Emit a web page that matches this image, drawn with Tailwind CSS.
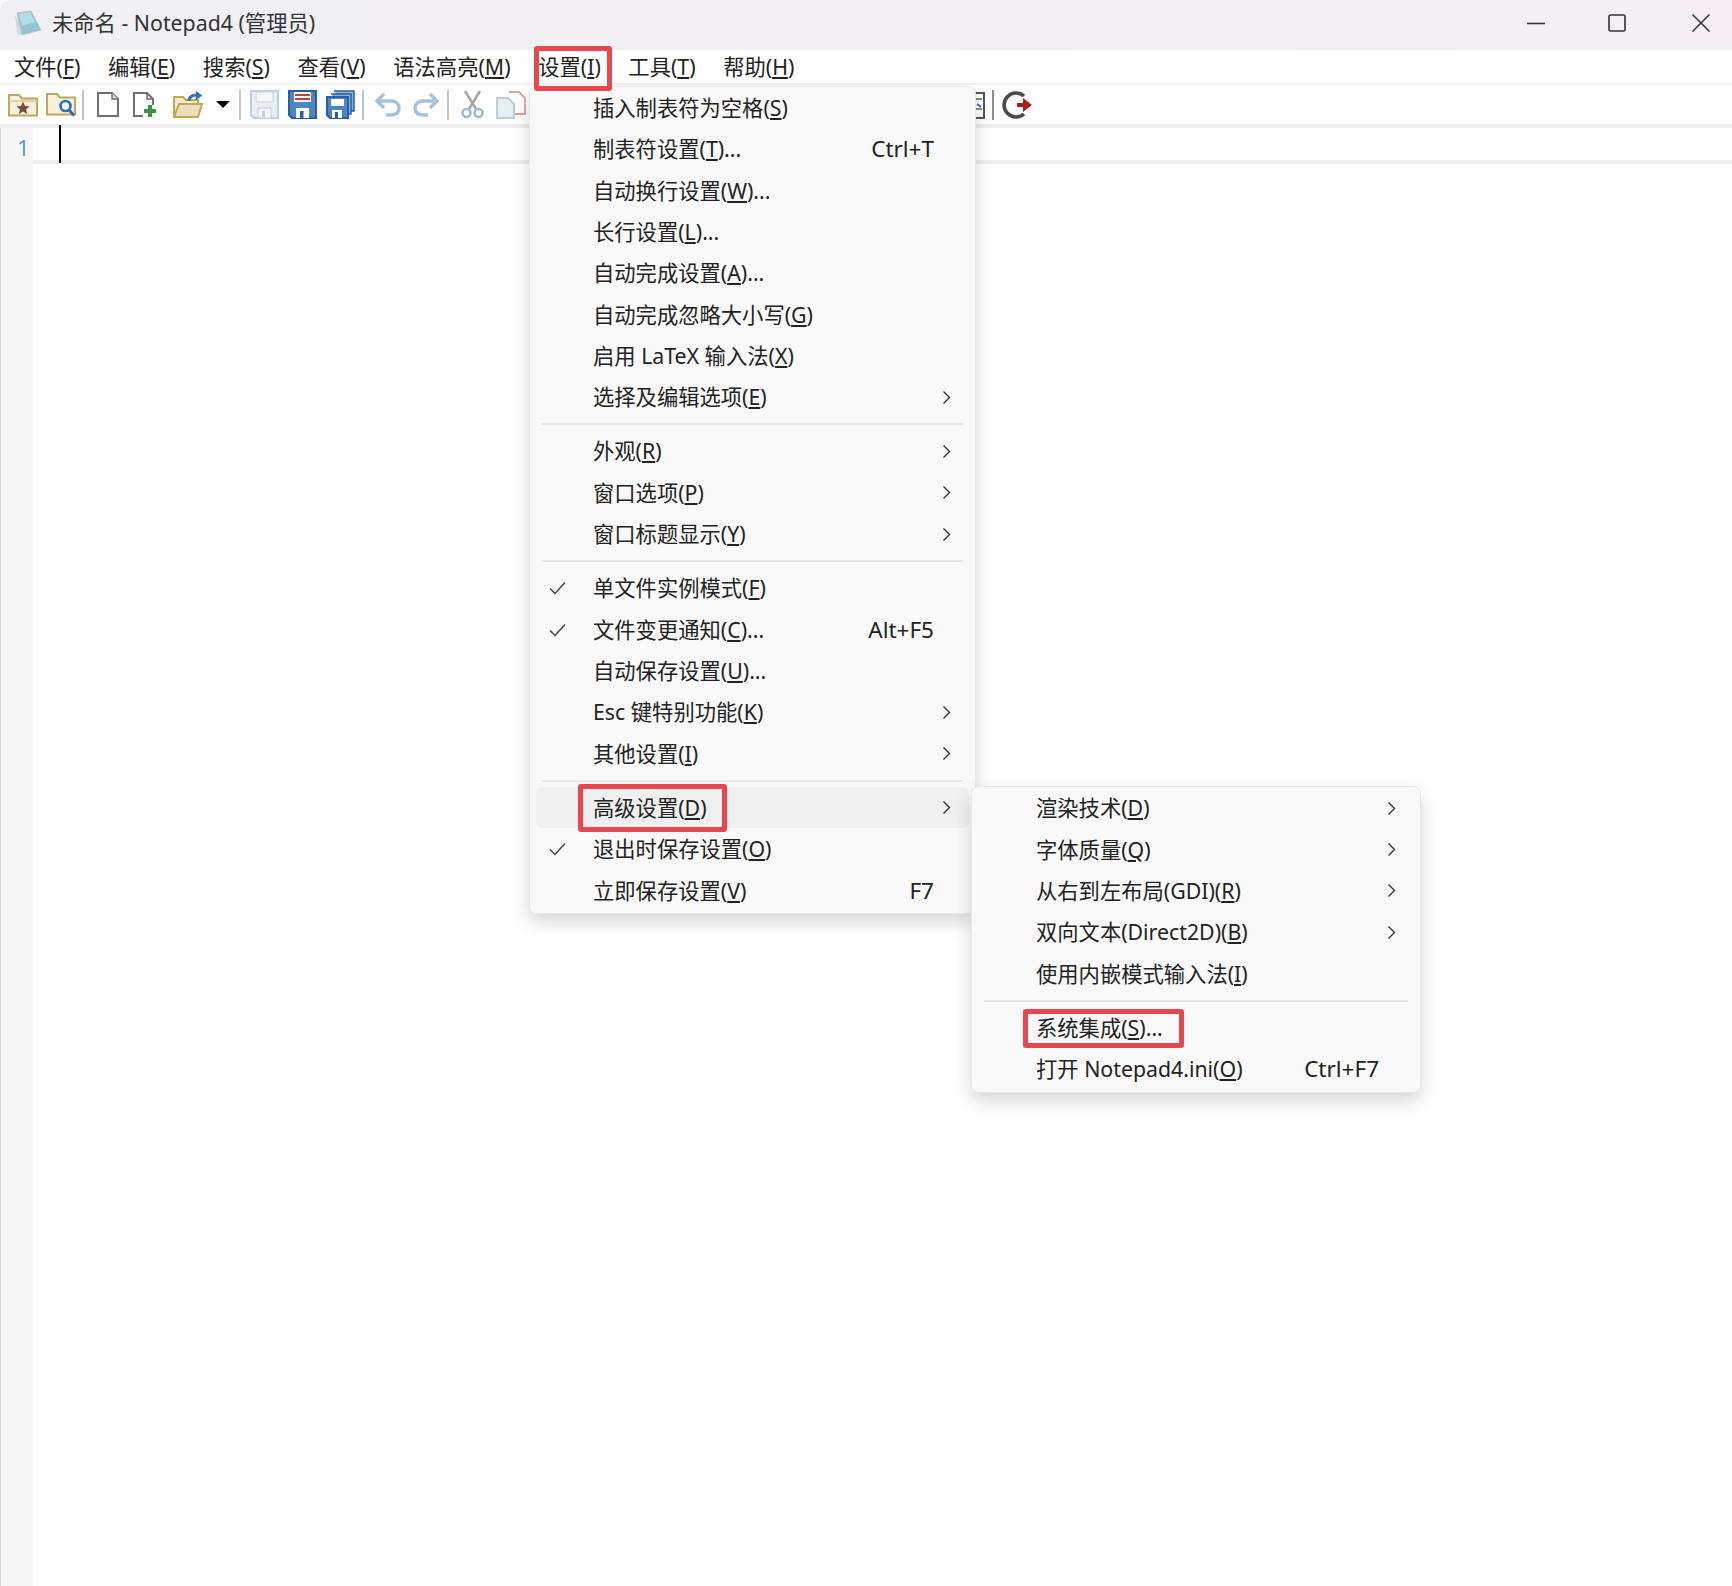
<!DOCTYPE html>
<html lang="zh-CN">
  <head>
    <meta charset="UTF-8" />
    <script src="https://cdn.jsdelivr.net/npm/@tailwindcss/browser@4"></script>
    <title>Notepad4</title>
  </head>
  <body class="bg-white">
    <div class="relative w-[1732px] h-[1586px] overflow-hidden bg-white text-[#222] text-[21.3px] font-['Noto_Sans','Noto_Sans_CJK_SC',sans-serif]">
      <!-- title bar -->
      <div class="h-[50px] pb-[4px] flex items-center rounded-tl-[10px] bg-gradient-to-r from-[#f0f0f5] to-[#f5eef5]">
        <svg class="ml-[14px] w-[29px] h-[26px]" viewBox="0 0 29 26">
          <path d="M1 5 L3 25 L12 24 Z" fill="#d8d8d4" />
          <path d="M3 3 L17 1 L27 20 L8 25 Z" fill="#8fc6d2" stroke="#b8c8cc" />
          <path d="M4 4 L16 2 L21 12 L8 16 Z" fill="#b5dde4" />
        </svg>
        <span class="ml-[9px] text-[#333]">未命名 - Notepad4 (管理员)</span>
        <div class="ml-auto flex items-center">
          <svg class="w-[20px] h-[20px]" viewBox="0 0 20 20"><path d="M1 10.5 H19" stroke="#333" stroke-width="1.6" /></svg>
          <svg class="ml-[61px] w-[20px] h-[20px]" viewBox="0 0 20 20"><rect x="2" y="2" width="16" height="16" rx="1.5" fill="none" stroke="#333" stroke-width="1.6" /></svg>
          <svg class="ml-[64px] mr-[21px] w-[20px] h-[20px]" viewBox="0 0 20 20"><path d="M1.5 1.5 L18.5 18.5 M18.5 1.5 L1.5 18.5" stroke="#333" stroke-width="1.5" /></svg>
        </div>
      </div>

      <!-- menu bar -->
      <div class="h-[35px] flex items-center pl-[14px] gap-[27.6px] border-b-2 border-[#f2f2f2]">
        <span>文件(<u class="underline-offset-2">F</u>)</span>
        <span>编辑(<u class="underline-offset-2">E</u>)</span>
        <span>搜索(<u class="underline-offset-2">S</u>)</span>
        <span>查看(<u class="underline-offset-2">V</u>)</span>
        <span>语法高亮(<u class="underline-offset-2">M</u>)</span>
        <span>设置(<u class="underline-offset-2">I</u>)</span>
        <span>工具(<u class="underline-offset-2">T</u>)</span>
        <span>帮助(<u class="underline-offset-2">H</u>)</span>
      </div>

      <!-- toolbar -->
      <div class="h-[39px] flex items-center">
        <!-- favorites -->
        <svg class="ml-[8px] w-[30px] h-[24px]" viewBox="0 0 30 24">
          <path d="M1 22.5 V2 H11 L14 5.5 H29 V22.5 Z" fill="#f6f0dc" stroke="#bda75c" stroke-width="2" />
          <path d="M1 8 H29" stroke="#d8c88e" stroke-width="1.5" />
          <path d="M15 8.5 L17 13 L21.6 13.4 L18 16.4 L19.2 21 L15 18.4 L10.8 21 L12 16.4 L8.4 13.4 L13 13 Z" fill="#7a4b3c" />
        </svg>
        <!-- find file -->
        <svg class="ml-[8px] w-[30px] h-[25px]" viewBox="0 0 30 25">
          <path d="M1 22.5 V2 H11 L14 5.5 H29 V22.5 Z" fill="#f6f0dc" stroke="#bda75c" stroke-width="2" />
          <circle cx="19.5" cy="14" r="5" fill="#eef5fb" stroke="#2d6cb5" stroke-width="2.6" />
          <path d="M23 18 L28 23.5" stroke="#2d6cb5" stroke-width="3" />
        </svg>
        <div class="ml-[6px] w-[2px] h-[30px] bg-[#c4c4c4]"></div>
        <!-- new -->
        <svg class="ml-[13px] w-[22px] h-[25px]" viewBox="0 0 22 25">
          <path d="M1 1 H15 L21 7 V24 H1 Z" fill="#fff" stroke="#707070" stroke-width="2" />
          <path d="M15 1 V7 H21" fill="#dcdcdc" stroke="#707070" stroke-width="1.5" />
        </svg>
        <!-- new window -->
        <svg class="ml-[14px] w-[24px] h-[26px]" viewBox="0 0 24 26">
          <path d="M10 24 H1 V1 H14 L20 7 V13" fill="#fff" stroke="#707070" stroke-width="2" />
          <path d="M14 1 V7 H20" fill="none" stroke="#707070" stroke-width="1.5" />
          <path d="M17 13 V25 M11 19 H23" stroke="#3f943f" stroke-width="4" />
        </svg>
        <!-- open -->
        <svg class="ml-[16px] w-[31px] h-[28px]" viewBox="0 0 31 28">
          <path d="M1 26 V6 H10 L13 9 H25 V13" fill="#f3ebcf" stroke="#c2a853" stroke-width="2" />
          <path d="M1 26 L6 13 H29 L25 26 Z" fill="#e9dfbd" stroke="#c2a853" stroke-width="2" />
          <path d="M16 10 C16 6 19 4 24 4" fill="none" stroke="#2f74c0" stroke-width="3" />
          <path d="M23 0 L29.5 4.5 L23 9 Z" fill="#2f74c0" />
        </svg>
        <!-- dropdown -->
        <div class="ml-[12px] w-0 h-0 border-x-[7px] border-x-transparent border-t-[7px] border-t-black"></div>
        <div class="ml-[9px] w-[2px] h-[30px] bg-[#c4c4c4]"></div>
        <!-- save disabled -->
        <svg class="ml-[9px] w-[29px] h-[29px]" viewBox="0 0 29 29">
          <path d="M1 1 H28 V28 H4 L1 25 Z" fill="#e8eef3" stroke="#bccfdc" stroke-width="2" />
          <rect x="6" y="2" width="17" height="10" fill="#f6f8fa" stroke="#c6d4de" />
          <rect x="8" y="18" width="13" height="10" fill="#f6f8fa" stroke="#bccfdc" />
          <rect x="12" y="21" width="3" height="6" fill="#bccfdc" />
        </svg>
        <!-- save -->
        <svg class="ml-[9px] w-[29px] h-[29px]" viewBox="0 0 29 29">
          <path d="M1 1 H28 V28 H4 L1 25 Z" fill="#4f86c0" stroke="#2a5f9e" stroke-width="2" />
          <rect x="6" y="2" width="17" height="10" fill="#f4f4f4" />
          <path d="M7 5 H22 M7 9 H22" stroke="#b5434a" stroke-width="2" />
          <rect x="8" y="18" width="13" height="10" fill="#fff" />
          <rect x="12" y="21" width="3.5" height="7" fill="#2a5f9e" />
        </svg>
        <!-- save all -->
        <svg class="ml-[9px] w-[29px] h-[29px]" viewBox="0 0 29 29">
          <path d="M8 1 H28 V21 H24" fill="#8fb3d6" stroke="#2a5f9e" stroke-width="1.5" />
          <path d="M5 4 H25 V24 H21" fill="#8fb3d6" stroke="#2a5f9e" stroke-width="1.5" />
          <path d="M1 7 H22 V28 H4 L1 25 Z" fill="#4f86c0" stroke="#2a5f9e" stroke-width="2" />
          <rect x="5" y="9" width="13" height="7" fill="#fff" />
          <rect x="6" y="20" width="10" height="8" fill="#fff" />
          <rect x="9" y="22" width="3" height="6" fill="#2a5f9e" />
        </svg>
        <div class="ml-[7px] w-[2px] h-[30px] bg-[#c4c4c4]"></div>
        <!-- undo -->
        <svg class="ml-[11px] w-[26px] h-[24px]" viewBox="0 0 26 24">
          <path d="M9 1 L2 8 L9 15" fill="none" stroke="#a6c2d9" stroke-width="3.4" />
          <path d="M3 8 H16 C21 8 24 11 24 15 C24 20 20 22 15 22 H11" fill="none" stroke="#a6c2d9" stroke-width="3.4" />
        </svg>
        <!-- redo -->
        <svg class="ml-[12px] w-[26px] h-[24px]" viewBox="0 0 26 24">
          <path d="M17 1 L24 8 L17 15" fill="none" stroke="#a6c2d9" stroke-width="3.4" />
          <path d="M23 8 H10 C5 8 2 11 2 15 C2 20 6 22 11 22 H15" fill="none" stroke="#a6c2d9" stroke-width="3.4" />
        </svg>
        <div class="ml-[8px] w-[2px] h-[30px] bg-[#c4c4c4]"></div>
        <!-- cut -->
        <svg class="ml-[12px] w-[23px] h-[29px]" viewBox="0 0 23 29">
          <path d="M4 1 L15 19 M19 1 L8 19" stroke="#a8a8a8" stroke-width="2.6" />
          <circle cx="5.5" cy="23" r="4" fill="none" stroke="#9dbbd6" stroke-width="2.6" />
          <circle cx="17.5" cy="23" r="4" fill="none" stroke="#9dbbd6" stroke-width="2.6" />
        </svg>
        <!-- copy -->
        <svg class="ml-[12px] w-[30px] h-[28px]" viewBox="0 0 30 28">
          <path d="M13 1 H23 L29 7 V23 H19" fill="#fff" stroke="#d9a4a4" stroke-width="1.8" />
          <path d="M1 7 H12 L18 13 V27 H1 Z" fill="#e6eef4" stroke="#b8cfe0" stroke-width="2" />
        </svg>
        <div class="flex-none w-[449px]"></div>
        <!-- slice of the icon behind the menu -->
        <svg class="w-[10px] h-[28px]" viewBox="0 0 10 28">
          <path d="M0 2 H9 V27 H0" fill="#fff" stroke="#555" stroke-width="2" />
          <path d="M1 8 H7 M1 18 H7" stroke="#888" stroke-width="2" />
          <path d="M2 13 L6 16" stroke="#3a78c0" stroke-width="2" />
        </svg>
        <div class="ml-[7px] w-[2px] h-[30px] bg-[#8c8c8c]"></div>
        <!-- exit -->
        <svg class="ml-[8px] w-[30px] h-[30px]" viewBox="0 0 30 30">
          <path d="M22 6 A12 12 0 1 0 22 24" fill="none" stroke="#4a4a4a" stroke-width="3.6" />
          <path d="M15 13 H21 V8 L30 15 L21 22 V17 H15 Z" fill="#a81c1c" />
        </svg>
      </div>

      <!-- editor -->
      <div class="absolute left-0 top-[124px] bottom-0 w-full flex flex-col">
        <div class="h-[4px] bg-[#eeeeee]"></div>
        <div class="flex flex-1">
          <div class="w-[33px] bg-[#f7f7f7] border-l border-[#d8d8d8] pt-[4px] pl-[16px] text-[#5f9fb3] text-[22px] leading-[30px]">1</div>
          <div class="flex-1">
            <div class="h-[36px] border-b-4 border-[#eeeeee]"></div>
          </div>
        </div>
      </div>
      <div class="absolute left-[59px] top-[125px] w-[2px] h-[38px] bg-black"></div>

      <!-- settings menu -->
      <div class="absolute left-[529px] top-[86px] w-[447px] h-[828px] rounded-[8px] bg-[#f9f9f9] border border-[#e8e8e8] shadow-[0_8px_18px_rgba(0,0,0,0.16)]">
        <div class="h-[41.4px] flex items-center"><div class="w-[63px]"></div><span>插入制表符为空格(<u class="underline-offset-2">S</u>)</span></div>
        <div class="h-[41.4px] flex items-center"><div class="w-[63px]"></div><span class="flex-1">制表符设置(<u class="underline-offset-2">T</u>)...</span><span class="mr-[41px] text-[22.5px]">Ctrl+T</span></div>
        <div class="h-[41.4px] flex items-center"><div class="w-[63px]"></div><span>自动换行设置(<u class="underline-offset-2">W</u>)...</span></div>
        <div class="h-[41.4px] flex items-center"><div class="w-[63px]"></div><span>长行设置(<u class="underline-offset-2">L</u>)...</span></div>
        <div class="h-[41.4px] flex items-center"><div class="w-[63px]"></div><span>自动完成设置(<u class="underline-offset-2">A</u>)...</span></div>
        <div class="h-[41.4px] flex items-center"><div class="w-[63px]"></div><span>自动完成忽略大小写(<u class="underline-offset-2">G</u>)</span></div>
        <div class="h-[41.4px] flex items-center"><div class="w-[63px]"></div><span>启用 LaTeX 输入法(<u class="underline-offset-2">X</u>)</span></div>
        <div class="h-[41.4px] flex items-center"><div class="w-[63px]"></div><span class="flex-1">选择及编辑选项(<u class="underline-offset-2">E</u>)</span><svg class="mr-[24px] w-[9px] h-[15px]" viewBox="0 0 9 15"><path d="M1.5 1.5 L7.5 7.5 L1.5 13.5" fill="none" stroke="#333" stroke-width="1.4" /></svg></div>
        <div class="h-[12.6px] flex items-center px-[12px]"><div class="h-[2px] w-full bg-[#e8e8e8]"></div></div>
        <div class="h-[41.4px] flex items-center"><div class="w-[63px]"></div><span class="flex-1">外观(<u class="underline-offset-2">R</u>)</span><svg class="mr-[24px] w-[9px] h-[15px]" viewBox="0 0 9 15"><path d="M1.5 1.5 L7.5 7.5 L1.5 13.5" fill="none" stroke="#333" stroke-width="1.4" /></svg></div>
        <div class="h-[41.4px] flex items-center"><div class="w-[63px]"></div><span class="flex-1">窗口选项(<u class="underline-offset-2">P</u>)</span><svg class="mr-[24px] w-[9px] h-[15px]" viewBox="0 0 9 15"><path d="M1.5 1.5 L7.5 7.5 L1.5 13.5" fill="none" stroke="#333" stroke-width="1.4" /></svg></div>
        <div class="h-[41.4px] flex items-center"><div class="w-[63px]"></div><span class="flex-1">窗口标题显示(<u class="underline-offset-2">Y</u>)</span><svg class="mr-[24px] w-[9px] h-[15px]" viewBox="0 0 9 15"><path d="M1.5 1.5 L7.5 7.5 L1.5 13.5" fill="none" stroke="#333" stroke-width="1.4" /></svg></div>
        <div class="h-[12.6px] flex items-center px-[12px]"><div class="h-[2px] w-full bg-[#e8e8e8]"></div></div>
        <div class="h-[41.4px] flex items-center"><div class="w-[63px] pl-[19px]"><svg class="w-[17px] h-[14px]" viewBox="0 0 17 14"><path d="M1 7.5 L6 12.5 L16 1.5" fill="none" stroke="#444" stroke-width="1.5" /></svg></div><span>单文件实例模式(<u class="underline-offset-2">F</u>)</span></div>
        <div class="h-[41.4px] flex items-center"><div class="w-[63px] pl-[19px]"><svg class="w-[17px] h-[14px]" viewBox="0 0 17 14"><path d="M1 7.5 L6 12.5 L16 1.5" fill="none" stroke="#444" stroke-width="1.5" /></svg></div><span class="flex-1">文件变更通知(<u class="underline-offset-2">C</u>)...</span><span class="mr-[41px] text-[22.5px]">Alt+F5</span></div>
        <div class="h-[41.4px] flex items-center"><div class="w-[63px]"></div><span>自动保存设置(<u class="underline-offset-2">U</u>)...</span></div>
        <div class="h-[41.4px] flex items-center"><div class="w-[63px]"></div><span class="flex-1">Esc 键特别功能(<u class="underline-offset-2">K</u>)</span><svg class="mr-[24px] w-[9px] h-[15px]" viewBox="0 0 9 15"><path d="M1.5 1.5 L7.5 7.5 L1.5 13.5" fill="none" stroke="#333" stroke-width="1.4" /></svg></div>
        <div class="h-[41.4px] flex items-center"><div class="w-[63px]"></div><span class="flex-1">其他设置(<u class="underline-offset-2">I</u>)</span><svg class="mr-[24px] w-[9px] h-[15px]" viewBox="0 0 9 15"><path d="M1.5 1.5 L7.5 7.5 L1.5 13.5" fill="none" stroke="#333" stroke-width="1.4" /></svg></div>
        <div class="h-[12.6px] flex items-center px-[12px]"><div class="h-[2px] w-full bg-[#e8e8e8]"></div></div>
        <div class="h-[41.4px] mx-[6px] flex items-center rounded-[6px] bg-[#f0f0f0]"><div class="w-[57px]"></div><span class="flex-1">高级设置(<u class="underline-offset-2">D</u>)</span><svg class="mr-[18px] w-[9px] h-[15px]" viewBox="0 0 9 15"><path d="M1.5 1.5 L7.5 7.5 L1.5 13.5" fill="none" stroke="#333" stroke-width="1.4" /></svg></div>
        <div class="h-[41.4px] flex items-center"><div class="w-[63px] pl-[19px]"><svg class="w-[17px] h-[14px]" viewBox="0 0 17 14"><path d="M1 7.5 L6 12.5 L16 1.5" fill="none" stroke="#444" stroke-width="1.5" /></svg></div><span>退出时保存设置(<u class="underline-offset-2">O</u>)</span></div>
        <div class="h-[41.4px] flex items-center"><div class="w-[63px]"></div><span class="flex-1">立即保存设置(<u class="underline-offset-2">V</u>)</span><span class="mr-[41px] text-[22.5px]">F7</span></div>
      </div>

      <!-- advanced submenu -->
      <div class="absolute left-[971px] top-[786px] w-[450px] h-[307px] pt-[0.5px] rounded-[8px] bg-[#f9f9f9] border border-[#e8e8e8] shadow-[0_8px_18px_rgba(0,0,0,0.16)]">
        <div class="h-[41.4px] flex items-center"><div class="w-[64px]"></div><span class="flex-1">渲染技术(<u class="underline-offset-2">D</u>)</span><svg class="mr-[24px] w-[9px] h-[15px]" viewBox="0 0 9 15"><path d="M1.5 1.5 L7.5 7.5 L1.5 13.5" fill="none" stroke="#333" stroke-width="1.4" /></svg></div>
        <div class="h-[41.4px] flex items-center"><div class="w-[64px]"></div><span class="flex-1">字体质量(<u class="underline-offset-2">Q</u>)</span><svg class="mr-[24px] w-[9px] h-[15px]" viewBox="0 0 9 15"><path d="M1.5 1.5 L7.5 7.5 L1.5 13.5" fill="none" stroke="#333" stroke-width="1.4" /></svg></div>
        <div class="h-[41.4px] flex items-center"><div class="w-[64px]"></div><span class="flex-1">从右到左布局(GDI)(<u class="underline-offset-2">R</u>)</span><svg class="mr-[24px] w-[9px] h-[15px]" viewBox="0 0 9 15"><path d="M1.5 1.5 L7.5 7.5 L1.5 13.5" fill="none" stroke="#333" stroke-width="1.4" /></svg></div>
        <div class="h-[41.4px] flex items-center"><div class="w-[64px]"></div><span class="flex-1">双向文本(Direct2D)(<u class="underline-offset-2">B</u>)</span><svg class="mr-[24px] w-[9px] h-[15px]" viewBox="0 0 9 15"><path d="M1.5 1.5 L7.5 7.5 L1.5 13.5" fill="none" stroke="#333" stroke-width="1.4" /></svg></div>
        <div class="h-[41.4px] flex items-center"><div class="w-[64px]"></div><span>使用内嵌模式输入法(<u class="underline-offset-2">I</u>)</span></div>
        <div class="h-[12.6px] flex items-center px-[12px]"><div class="h-[2px] w-full bg-[#e8e8e8]"></div></div>
        <div class="h-[41.4px] flex items-center"><div class="w-[64px]"></div><span>系统集成(<u class="underline-offset-2">S</u>)...</span></div>
        <div class="h-[41.4px] flex items-center"><div class="w-[64px]"></div><span class="flex-1">打开 Notepad4.ini(<u class="underline-offset-2">O</u>)</span><span class="mr-[41px] text-[22.5px]">Ctrl+F7</span></div>
      </div>

      <!-- red annotation boxes -->
      <div class="absolute left-[534px] top-[46px] w-[78px] h-[45px] rounded-[3px] border-[5px] border-[#e8474f]"></div>
      <div class="absolute left-[578px] top-[784px] w-[149px] h-[48px] rounded-[3px] border-[5px] border-[#e8474f]"></div>
      <div class="absolute left-[1023px] top-[1009px] w-[161px] h-[39px] rounded-[3px] border-[5px] border-[#e8474f]"></div>
    </div>
  </body>
</html>
